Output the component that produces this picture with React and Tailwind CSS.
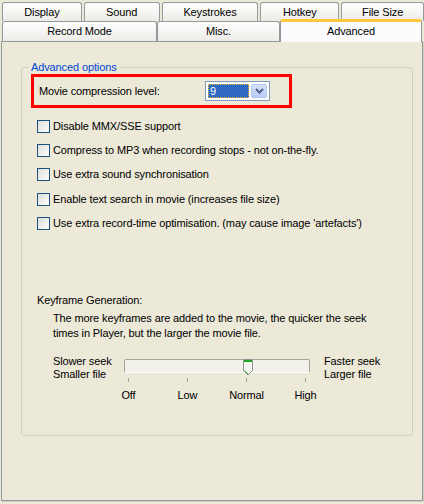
import React from 'react';

const rowOneTabs = [
  { label: 'Display', w: 'w-[80px]' },
  { label: 'Sound', w: 'w-[76px]' },
  { label: 'Keystrokes', w: 'w-[97px]' },
  { label: 'Hotkey', w: 'w-[79px]' },
  { label: 'File Size', w: 'w-[83px]' },
];

const options = [
  { label: 'Disable MMX/SSE support', h: 'h-[24px]' },
  { label: 'Compress to MP3 when recording stops - not on-the-fly.', h: 'h-[24px]' },
  { label: 'Use extra sound synchronisation', h: 'h-[25px]' },
  { label: 'Enable text search in movie (increases file size)', h: 'h-[24px]' },
  { label: "Use extra record-time optimisation. (may cause image 'artefacts')", h: 'h-[24px]' },
];

const Tab = ({ label, className }) => (
  <div
    className={`flex items-center justify-center border border-b-0 border-[#919B9C] rounded-t-[3px] bg-gradient-to-b from-white to-[#ECEBE6] text-black ${className}`}
  >
    {label}
  </div>
);

const Checkbox = () => (
  <div className="w-[13px] h-[13px] border border-[#1C5180] bg-gradient-to-br from-[#DCDCD7] to-white shrink-0" />
);

const App = () => {
  return (
    <div className="w-[424px] h-[504px] bg-[#ECE9D8] text-[11px] leading-[13px] tracking-[-0.12px] text-black font-['Liberation_Sans',Arial,sans-serif] overflow-hidden">
      {/* tabs */}
      <div className="pt-[2px] pl-[2px]">
        <div className="flex gap-[2px] h-[19px]">
          {rowOneTabs.map((t) => (
            <Tab key={t.label} label={t.label} className={t.w} />
          ))}
        </div>
        <div className="flex h-[20px] relative z-10">
          <Tab label="Record Mode" className="w-[155px]" />
          <Tab label="Misc." className="w-[123px]" />
          <div className="w-[142px] h-[23px] -mt-[2px] bg-[#FCFCFE] border-x border-[#919B9C] border-t-[3px] border-t-[#FFC83C] rounded-t-[3px] flex items-center justify-center pb-[2px]">
            Advanced
          </div>
        </div>
      </div>

      {/* panel */}
      <div className="ml-[1px] w-[422px] h-[460px] border border-[#919B9C] shadow-[1px_1px_0_#D0CEBF] bg-[#ECE9D8] pt-[19px] pl-[19px]">
        <fieldset className="w-[392px] h-[375px] border border-[#D0D0BF] rounded-[3px] px-0">
          <legend className="ml-[7px] px-[2px] text-[#0046D5] leading-[13px]">Advanced options</legend>

          {/* compression level */}
          <div className="ml-[9px] w-[261px] h-[34px] border-[3px] border-[#FF0000] flex items-center pl-[5px]">
            <span className="w-[166px] shrink-0">Movie compression level:</span>
            <div className="w-[65px] h-[20px] border border-[#7F9DB9] bg-white flex items-center p-[2px] gap-[2px]">
              <div className="flex-1 h-full bg-[#316AC5] border border-dotted border-[#F0C020] text-white flex items-center pl-[1px]">
                9
              </div>
              <div className="w-[16px] h-full rounded-[2px] bg-gradient-to-b from-[#D4E0FD] to-[#B9CEF9] border border-[#B5C8F4] flex items-center justify-center">
                <svg width="9" height="6" viewBox="0 0 9 6">
                  <path d="M1 1 L4.5 4.5 L8 1" fill="none" stroke="#4D6185" strokeWidth="2" />
                </svg>
              </div>
            </div>
          </div>

          {/* check options */}
          <div className="mt-[6px] ml-[15px] flex flex-col">
            {options.map((o) => (
              <label key={o.label} className={`flex items-center gap-[3px] ${o.h}`}>
                <Checkbox />
                <span>{o.label}</span>
              </label>
            ))}
          </div>

          {/* keyframes */}
          <div className="mt-[59px] ml-[15px]">Keyframe Generation:</div>
          <p className="mt-[4px] ml-[31px] leading-[15px]">
            The more keyframes are added to the movie, the quicker the seek
            <br />
            times in Player, but the larger the movie file.
          </p>

          <div className="mt-[14px] ml-[31px] flex">
            <div className="w-[71px]">
              <div>Slower seek</div>
              <div>Smaller file</div>
            </div>
            <div className="w-[186px] mt-[4px]">
              <div className="relative h-[14px] rounded-[2px] border border-[#A5A39B] border-b-white bg-[#F3F2EA]">
                <svg className="absolute left-[118px] -top-[1px]" width="10" height="17" viewBox="0 0 10 17">
                  <path d="M0.5 1.5 Q0.5 0.5 1.5 0.5 H8.5 Q9.5 0.5 9.5 1.5 V11.5 L5 16 L0.5 11.5 Z" fill="#F5F5F1" stroke="#8C9196" />
                  <rect x="1" y="1" width="8" height="2" fill="#21A121" />
                  <path d="M1.5 11.5 L5 15" stroke="#3CB43C" />
                </svg>
              </div>
              <div className="mt-[5px] h-[4px] px-[4px] flex justify-between">
                {[0, 1, 2, 3].map((i) => (
                  <div key={i} className="w-[1px] h-full bg-[#A0A0A0]" />
                ))}
              </div>
              <div className="mt-[7px] px-[4px] flex justify-between">
                {['Off', 'Low', 'Normal', 'High'].map((l) => (
                  <div key={l} className="w-[1px] flex justify-center whitespace-nowrap">
                    {l}
                  </div>
                ))}
              </div>
            </div>
            <div className="ml-[14px]">
              <div>Faster seek</div>
              <div>Larger file</div>
            </div>
          </div>
        </fieldset>
      </div>
    </div>
  );
};

export default App;
